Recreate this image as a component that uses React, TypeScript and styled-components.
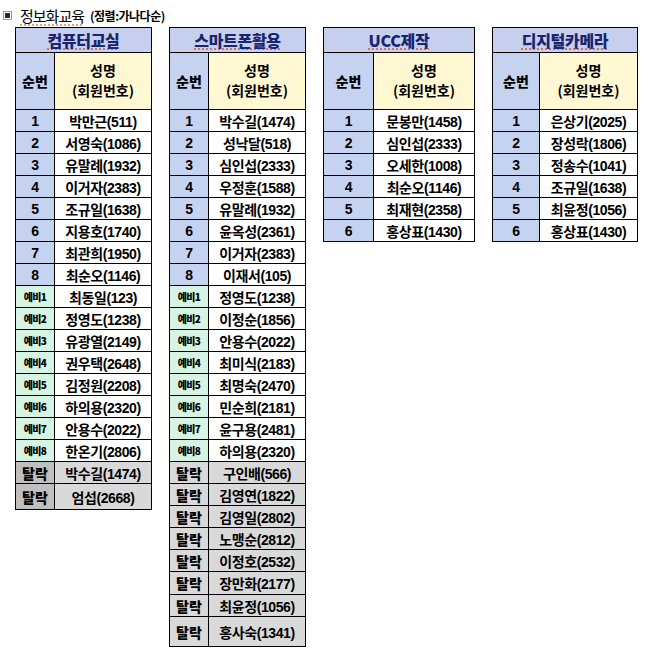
import styled, { createGlobalStyle } from "styled-components";

const GlobalStyle = createGlobalStyle`
  html, body {
    margin: 0;
    padding: 0;
    background: #ffffff;
  }
  body {
    font-family: "Liberation Sans", "Noto Sans CJK KR", sans-serif;
    color: #000000;
  }
`;

type Kind = "main" | "reserve" | "drop";

interface Member {
  label: string;
  name: string;
  kind: Kind;
  h?: number;
}

interface Course {
  title: string;
  seqW: number;
  width: number;
  dropDark?: boolean;
  members: Member[];
}

const build = (
  main: string[],
  reserve: string[],
  drop: string[],
  heights: Record<number, number> = {}
): Member[] => {
  const list: Member[] = [
    ...main.map((n, i) => ({ label: String(i + 1), name: n, kind: "main" as Kind })),
    ...reserve.map((n, i) => ({ label: `예비${i + 1}`, name: n, kind: "reserve" as Kind })),
    ...drop.map((n) => ({ label: "탈락", name: n, kind: "drop" as Kind })),
  ];
  return list.map((m, i) => (heights[i] ? { ...m, h: heights[i] } : m));
};

const courses: Course[] = [
  {
    title: "컴퓨터교실",
    seqW: 39,
    width: 137,
    dropDark: true,
    members: build(
      ["박만근(511)", "서영숙(1086)", "유말례(1932)", "이거자(2383)", "조규일(1638)", "지용호(1740)", "최관희(1950)", "최순오(1146)"],
      ["최동일(123)", "정영도(1238)", "유광열(2149)", "권우택(2648)", "김정원(2208)", "하의용(2320)", "안용수(2022)", "한온기(2806)"],
      ["박수길(1474)", "엄섭(2668)"],
      { 17: 26 }
    ),
  },
  {
    title: "스마트폰활용",
    seqW: 39,
    width: 137,
    members: build(
      ["박수길(1474)", "성낙달(518)", "심인섭(2333)", "우정훈(1588)", "유말례(1932)", "윤옥성(2361)", "이거자(2383)", "이재서(105)"],
      ["정영도(1238)", "이정순(1856)", "안용수(2022)", "최미식(2183)", "최명숙(2470)", "민순희(2181)", "윤구용(2481)", "하의용(2320)"],
      ["구인배(566)", "김영연(1822)", "김영일(2802)", "노맹순(2812)", "이정호(2532)", "장만화(2177)", "최윤정(1056)", "홍사숙(1341)"],
      { 21: 23, 23: 30 }
    ),
  },
  {
    title: "UCC제작",
    seqW: 50,
    width: 152,
    members: build(
      ["문봉만(1458)", "심인섭(2333)", "오세한(1008)", "최순오(1146)", "최재현(2358)", "홍상표(1430)"],
      [],
      []
    ),
  },
  {
    title: "디지털카메라",
    seqW: 47,
    width: 146,
    members: build(
      ["은상기(2025)", "장성락(1806)", "정송수(1041)", "조규일(1638)", "최윤정(1056)", "홍상표(1430)"],
      [],
      []
    ),
  },
];

const Page = styled.div`
  width: 648px;
  padding: 3px 0 0 0;
`;

const Heading = styled.div`
  display: flex;
  align-items: center;
  height: 24px;
  padding-left: 3px;
`;

const Bullet = styled.span`
  width: 7px;
  height: 7px;
  border: 1px solid #9a9a9a;
  background: #ffffff;
  display: flex;
  align-items: center;
  justify-content: center;
  margin-right: 8px;

  &::after {
    content: "";
    width: 5px;
    height: 5px;
    background: #2a2a2a;
  }
`;

const HeadTitle = styled.span`
  font-family: "Noto Sans CJK KR", sans-serif;
  font-size: 15px;
  letter-spacing: -1px;
  text-decoration: underline dotted #d98a3a;
  text-underline-offset: 3px;
`;

const HeadNote = styled.span`
  font-family: "Noto Sans CJK KR", sans-serif;
  font-size: 12px;
  font-weight: 700;
  margin-left: 6px;
  letter-spacing: -0.5px;
`;

const Board = styled.div`
  display: flex;
  align-items: flex-start;
  gap: 17px;
  padding-left: 15px;
`;

const Table = styled.div<{ $w: number }>`
  width: ${(p) => p.$w}px;
  border: 1px solid #000000;
  border-bottom: none;
  box-sizing: border-box;
  display: flex;
  flex-direction: column;
`;

const TitleRow = styled.div`
  height: 25px;
  box-sizing: border-box;
  border-bottom: 1px solid #000000;
  background: #c6d0ee;
  display: flex;
  align-items: center;
  justify-content: center;
  font-family: "Noto Sans CJK KR", sans-serif;
  font-weight: 900;
  font-size: 16px;
  color: #1b2470;
  letter-spacing: -0.3px;
`;

const TitleText = styled.span`
  text-decoration: underline dotted #d0603a;
  text-underline-offset: 2px;
`;

const Row = styled.div<{ $seq: number; $h: number }>`
  display: grid;
  grid-template-columns: ${(p) => p.$seq}px 1fr;
  height: ${(p) => p.$h}px;
  box-sizing: border-box;
  border-bottom: 1px solid #000000;
`;

const Cell = styled.div<{ $bg: string }>`
  background: ${(p) => p.$bg};
  display: flex;
  align-items: center;
  justify-content: center;
  white-space: nowrap;
  font-weight: 700;
  font-size: 14px;
`;

const SeqCell = styled(Cell)`
  border-right: 1px solid #000000;
`;

const Label = styled.span<{ $kind: Kind }>`
  font-family: "Noto Sans CJK KR", sans-serif;
  font-size: ${(p) => (p.$kind === "reserve" ? "10px" : "14px")};
  font-weight: 900;
  color: #000000;
  letter-spacing: ${(p) => (p.$kind === "reserve" ? "-0.6px" : "0")};
`;

const HeaderName = styled.div`
  display: flex;
  flex-direction: column;
  align-items: center;
  gap: 3px;
  font-family: "Noto Sans CJK KR", sans-serif;
  font-size: 14px;
  font-weight: 700;
  line-height: 17px;
  margin-top: -2px;
`;

const Name = styled.span`
  font-family: "Liberation Sans", "Noto Sans CJK KR", sans-serif;
  font-weight: 700;
  font-size: 14px;
  letter-spacing: -0.4px;
`;

const BLUE = "#c6d3f0";
const CREAM = "#fff8d3";
const MINT = "#d6f3e4";
const GREY = "#d9d9d9";
const GREY_DARK = "#bfbfbf";

const seqBg = (kind: Kind, dark?: boolean) =>
  kind === "main" ? BLUE : kind === "reserve" ? MINT : dark ? GREY_DARK : GREY;

const CourseTable: React.FC<{ course: Course }> = ({ course }) => (
  <Table $w={course.width}>
    <TitleRow>
      <TitleText>{course.title}</TitleText>
    </TitleRow>
    <Row $seq={course.seqW} $h={57}>
      <SeqCell $bg={BLUE}>
        <Label $kind="main">순번</Label>
      </SeqCell>
      <Cell $bg={CREAM}>
        <HeaderName>
          <span>성명</span>
          <span>(회원번호)</span>
        </HeaderName>
      </Cell>
    </Row>
    {course.members.map((m, i) => (
      <Row key={i} $seq={course.seqW} $h={m.h ?? 22}>
        <SeqCell $bg={seqBg(m.kind, course.dropDark)}>
          {m.kind === "main" ? <Name>{m.label}</Name> : <Label $kind={m.kind}>{m.label}</Label>}
        </SeqCell>
        <Cell $bg={m.kind === "drop" ? GREY : "#ffffff"}>
          <Name>{m.name}</Name>
        </Cell>
      </Row>
    ))}
  </Table>
);

export default function App() {
  return (
    <Page>
      <GlobalStyle />
      <Heading>
        <Bullet />
        <HeadTitle>정보화교육</HeadTitle>
        <HeadNote>(정렬:가나다순)</HeadNote>
      </Heading>
      <Board>
        {courses.map((c) => (
          <CourseTable key={c.title} course={c} />
        ))}
      </Board>
    </Page>
  );
}
